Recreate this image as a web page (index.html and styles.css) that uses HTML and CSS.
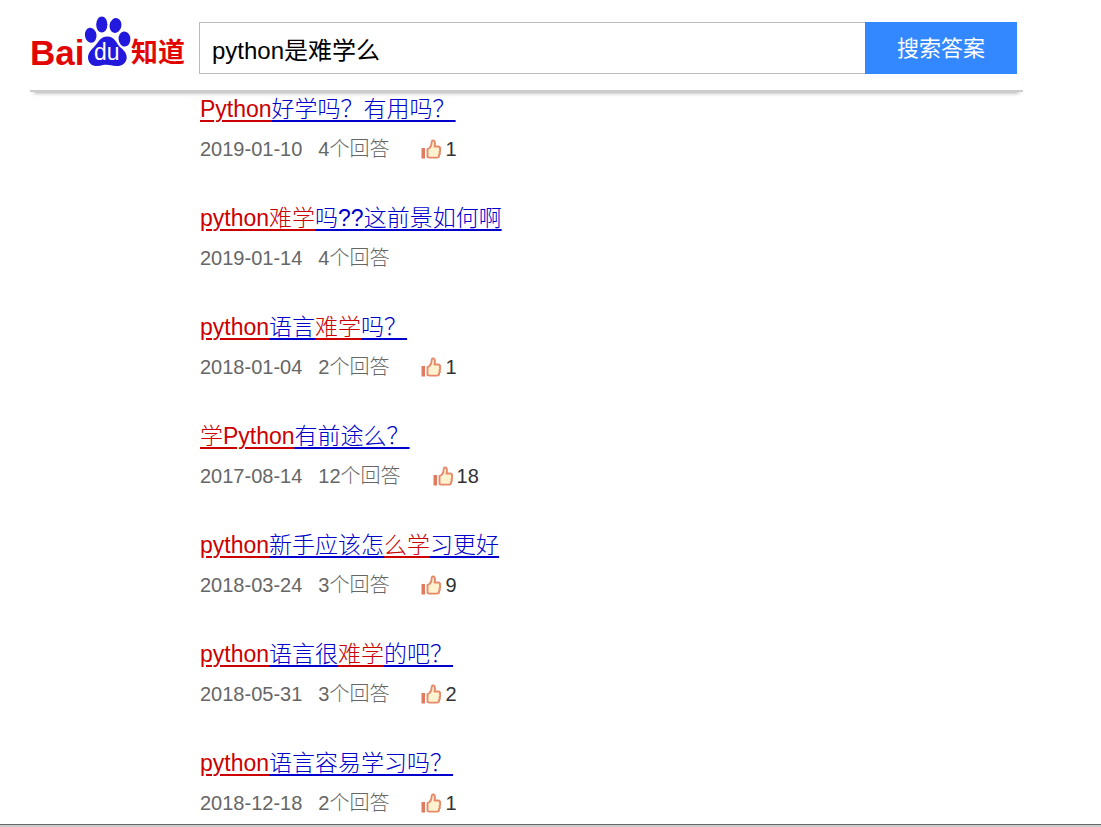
FILE: index.html
```html
<!DOCTYPE html>
<html lang="zh-CN">
<head>
  <meta charset="UTF-8">
  <meta name="viewport" content="width=device-width, initial-scale=1.0">
  <title>python是难学么_百度知道</title>
  <link rel="stylesheet" href="styles.css">
</head>
<body>
  <svg width="0" height="0" class="sprite" aria-hidden="true">
    <symbol id="thumb" viewBox="0 0 20 20">
      <rect x="0.500" y="9" width="3.500" height="10.500" fill="#df7c60"/>
      <path d="M6.500 10L8.500 9C10.500 7 10.800 5 10.800 2.500C11 0.800 14 0.800 14 4.500L13.500 7.500H17C19 7.500 19.500 9 18.800 10C19.400 11 19.200 12.500 18.500 13C19 14 18.700 15.500 18 16C18.300 17.500 17.500 18.600 16 18.600H8.500L6.500 18Z" fill="#fff2cf" stroke="#e8896a" stroke-width="1.900" stroke-linejoin="round"/>
    </symbol>
  </svg>

  <header class="header">
    <a class="logo" href="#" title="百度知道">
      <svg width="160" height="54" viewBox="26 14 160 54" role="img" aria-label="百度知道">
        <text class="logo-red" x="30" y="65" font-size="35">Bai</text>
        <g fill="#2319dc">
          <ellipse cx="90.700" cy="35.300" rx="5.800" ry="7.500" transform="rotate(-8 90.700 35.300)"/>
          <ellipse cx="101.800" cy="24.500" rx="5.600" ry="8"/>
          <ellipse cx="115.500" cy="25.500" rx="5.900" ry="7.500" transform="rotate(12 115.500 25.500)"/>
          <ellipse cx="124.500" cy="39" rx="5.900" ry="7.500" transform="rotate(-5 124.500 39)"/>
          <path d="M107.500 36.500C114 36.500 116 42 119 46C122 49 127 52 126.700 58C126 64 121 66.500 116 66C111 65.500 108 64 103 65C98 66.500 91 67 88.700 61C86.500 55 90 51 94 47C98 43 100 36.500 107.500 36.500Z"/>
        </g>
        <text class="logo-du" x="94" y="60" font-size="23">du</text>
        <text class="logo-red" x="131" y="62" font-size="27">知道</text>
      </svg>
    </a>
    <form class="search" action="#">
      <input class="search-input" type="text" name="word" value="python是难学么" aria-label="搜索问题">
      <button class="search-button" type="submit">搜索答案</button>
    </form>
  </header>

  <main>
    <ul class="results">
      <li>
        <a class="title" href="#"><em>Python</em>好学吗？有用吗？</a>
        <div class="meta">
          <span class="date">2019-01-10</span>
          <span class="answers">4个回答</span>
          <span class="likes"><svg><use href="#thumb"/></svg>1</span>
        </div>
      </li>
      <li>
        <a class="title" href="#"><em>python难学</em>吗??这前景如何啊</a>
        <div class="meta">
          <span class="date">2019-01-14</span>
          <span class="answers">4个回答</span>
        </div>
      </li>
      <li>
        <a class="title" href="#"><em>python</em>语言<em>难学</em>吗？</a>
        <div class="meta">
          <span class="date">2018-01-04</span>
          <span class="answers">2个回答</span>
          <span class="likes"><svg><use href="#thumb"/></svg>1</span>
        </div>
      </li>
      <li>
        <a class="title" href="#"><em>学Python</em>有前途么？</a>
        <div class="meta">
          <span class="date">2017-08-14</span>
          <span class="answers">12个回答</span>
          <span class="likes"><svg><use href="#thumb"/></svg>18</span>
        </div>
      </li>
      <li>
        <a class="title" href="#"><em>python</em>新手应该怎<em>么学</em>习更好</a>
        <div class="meta">
          <span class="date">2018-03-24</span>
          <span class="answers">3个回答</span>
          <span class="likes"><svg><use href="#thumb"/></svg>9</span>
        </div>
      </li>
      <li>
        <a class="title" href="#"><em>python</em>语言很<em>难学</em>的吧？</a>
        <div class="meta">
          <span class="date">2018-05-31</span>
          <span class="answers">3个回答</span>
          <span class="likes"><svg><use href="#thumb"/></svg>2</span>
        </div>
      </li>
      <li>
        <a class="title" href="#"><em>python</em>语言容易学习吗？</a>
        <div class="meta">
          <span class="date">2018-12-18</span>
          <span class="answers">2个回答</span>
          <span class="likes"><svg><use href="#thumb"/></svg>1</span>
        </div>
      </li>
    </ul>
  </main>
  <footer class="footer"></footer>
</body>
</html>
```
FILE: styles.css
```css
* {
  box-sizing: border-box;
}

body {
  margin: 0;
  background: #fff;
  font-family: "Liberation Sans", Arial, "Noto Sans CJK SC", sans-serif;
}

.sprite {
  position: absolute;
}

.header {
  display: flex;
  margin: 0 78px 0 30px;
  padding: 22px 6px 16px 0;
  border-bottom: 2px solid #ccc;
  box-shadow: 0 5px 4px -4px #aaa;
}

.logo {
  flex: none;
  width: 169px;
  height: 52px;
}

.logo svg {
  display: block;
  margin: -8px 0 0 -4px;
}

.logo-red {
  fill: #e10602;
  font-weight: bold;
}

.logo-du {
  fill: #fff;
}

.search {
  display: flex;
  flex: 1;
  height: 52px;
}

.search-input {
  flex: 1;
  min-width: 0;
  padding: 0 12px;
  border: 1px solid #bbb;
  border-right: none;
  border-radius: 0;
  outline: none;
  color: #000;
  font-family: inherit;
  font-size: 24px;
}

.search-button {
  width: 152px;
  padding: 0 0 4px;
  border: none;
  background: #38f;
  color: #fff;
  font-family: inherit;
  font-size: 22px;
  cursor: pointer;
}

.results {
  margin: 0;
  padding: 1px 78px 0 200px;
  list-style: none;
}

.results li + li {
  margin-top: 33px;
}

.title {
  display: block;
  width: fit-content;
  color: #00c;
  font-size: 23px;
  font-weight: 300;
  line-height: 32px;
  text-decoration: underline;
  text-decoration-thickness: 2px;
  text-underline-offset: 3px;
}

.title em {
  color: #c00;
  font-style: normal;
  text-decoration: inherit;
  text-decoration-color: #c00;
}

.meta {
  display: flex;
  align-items: center;
  height: 40px;
  margin-top: 4px;
  color: #666;
  font-size: 20px;
  font-weight: 300;
  line-height: 40px;
}

.answers {
  margin-left: 16px;
}

.likes {
  display: flex;
  align-items: center;
  margin-left: 32px;
  color: #333;
}

.likes svg {
  width: 20px;
  height: 20px;
  margin-right: 4px;
}

.footer {
  height: 3px;
  margin-top: 1px;
  border-top: 1px solid #666;
  background: #ccc;
}
```
